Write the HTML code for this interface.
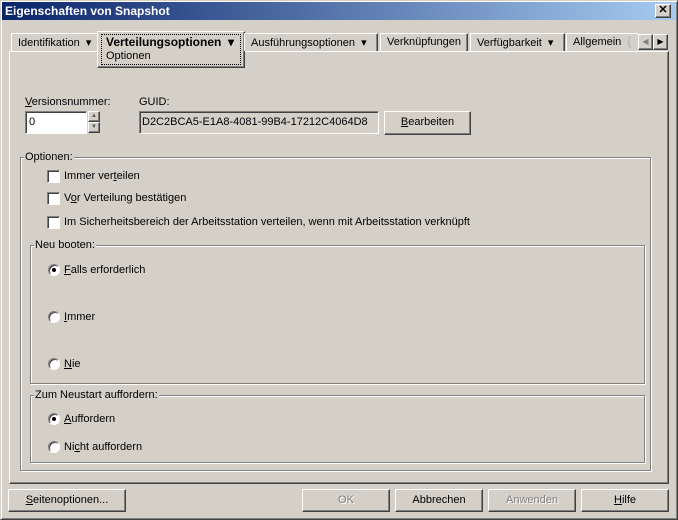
<!DOCTYPE html>
<html><head><meta charset="utf-8"><style>
*{box-sizing:border-box;margin:0;padding:0}
body{width:678px;height:520px;background:#d4d0c8;font:11px "Liberation Sans",Arial,sans-serif;color:#000;position:relative;overflow:hidden}
.a{position:absolute;white-space:nowrap}
.win{position:absolute;left:0;top:0;width:678px;height:520px;border:1px solid;border-color:#d4d0c8 #404040 #404040 #d4d0c8;box-shadow:inset 1px 1px #fff,inset -1px -1px #808080}
.title{position:absolute;left:2px;top:2px;width:674px;height:18px;background:linear-gradient(90deg,#0a246a,#a6caf0);color:#fff;font-weight:bold;font-size:12px;padding:2px 0 0 3px}
.raised{border:1px solid;border-color:#fff #404040 #404040 #fff;box-shadow:inset -1px -1px #808080}
.sunk{border:1px solid;border-color:#808080 #fff #fff #808080;box-shadow:inset 1px 1px #404040}
.tab{position:absolute;top:33px;height:18px;border:1px solid;border-color:#fff #404040 transparent #fff;border-bottom:none;box-shadow:inset -1px 0 #808080;padding:2px 0 0 6px}
.grp{position:absolute;border:1px solid #808080;box-shadow:1px 1px #fff,inset 1px 1px #fff}
.gl{position:absolute;background:#d4d0c8;padding:0 1px;top:-7px;left:3px}
.cb{position:absolute;width:13px;height:13px;background:#fff;border:1px solid;border-color:#808080 #fff #fff #808080;box-shadow:inset 1px 1px #404040}
.rb{position:absolute;width:12px;height:12px;border-radius:50%;background:#fff;border:1px solid;border-color:#808080 #fff #fff #808080;box-shadow:inset 1px 1px #404040}
.rb.on::after{content:"";position:absolute;left:3px;top:3px;width:4px;height:4px;border-radius:50%;background:#000}
.btn{position:absolute;height:23px;text-align:center;padding-top:4px;border:1px solid;border-color:#fff #404040 #404040 #fff;box-shadow:inset -1px -1px #808080}
.dis{color:#808080;text-shadow:1px 1px #fff}
u{text-decoration:underline}
</style></head><body>
<div class="win"></div>
<div class="title">Eigenschaften von Snapshot</div>
<div class="a raised" style="left:655px;top:4px;width:16px;height:14px;background:#d4d0c8;font-size:11px;font-weight:bold;text-align:center;line-height:11px">✕</div>

<!-- content panel -->
<div class="a" style="left:9px;top:51px;width:660px;height:433px;border:1px solid;border-color:#fff #404040 #404040 #fff;box-shadow:inset -1px -1px #808080"></div>

<div class="tab" style="left:11px;width:88px">Identifikation &nbsp;▾</div>
<div class="a" style="left:97px;top:31px;width:148px;height:37px;background:#d4d0c8;border:1px solid;border-color:#fff #404040 #404040 #fff;box-shadow:inset -1px -1px #808080"></div>
<div class="a" style="left:101px;top:34px;width:140px;height:31px;border:1px dotted #000"></div>
<div class="a" style="left:106px;top:35px;font-weight:bold;font-size:12px">Verteilungsoptionen &nbsp;▾</div>
<div class="a" style="left:106px;top:50px">Optionen</div>
<div class="tab" style="left:244px;width:134px">Ausführungsoptionen &nbsp;▾</div>
<div class="tab" style="left:380px;width:88px">Verknüpfungen</div>
<div class="tab" style="left:470px;width:95px">Verfügbarkeit &nbsp;▾</div>
<div class="tab" style="left:566px;width:72px;border-right:none;box-shadow:none">Allgemein &nbsp;<span style="color:#aaa">{</span></div>
<div class="a raised" style="left:638px;top:34px;width:15px;height:16px;text-align:center;font-size:8px;color:#808080;padding-top:2px">◀</div>
<div class="a raised" style="left:653px;top:34px;width:15px;height:16px;text-align:center;font-size:8px;padding-top:2px">▶</div>

<div class="a" style="left:25px;top:96px"><u>V</u>ersionsnummer:</div>
<div class="a sunk" style="left:25px;top:111px;width:62px;height:23px;background:#fff;padding:4px 0 0 3px">0</div>
<div class="a raised" style="left:88px;top:111px;width:12px;height:11px;font-size:6px;text-align:center;line-height:9px;color:#555">▲</div>
<div class="a raised" style="left:88px;top:122px;width:12px;height:11px;font-size:6px;text-align:center;line-height:9px;color:#555">▼</div>
<div class="a" style="left:139px;top:96px">GUID:</div>
<div class="a sunk" style="left:139px;top:111px;width:240px;height:23px;padding:4px 0 0 2px">D2C2BCA5-E1A8-4081-99B4-17212C4064D8</div>
<div class="btn" style="left:384px;top:111px;width:87px;height:24px"><u>B</u>earbeiten</div>

<div class="grp" style="left:20px;top:157px;width:631px;height:314px"><span class="gl">Optionen:</span></div>
<div class="cb" style="left:47px;top:170px"></div><div class="a" style="left:64px;top:170px">Immer ver<u>t</u>eilen</div>
<div class="cb" style="left:47px;top:192px"></div><div class="a" style="left:64px;top:192px">V<u>o</u>r Verteilung bestätigen</div>
<div class="cb" style="left:47px;top:216px"></div><div class="a" style="left:64px;top:216px">Im Sicherheitsbereich der Arbeitsstation verteilen, wenn mit Arbeitsstation verknüpft</div>

<div class="grp" style="left:30px;top:245px;width:615px;height:139px"><span class="gl">Neu booten:</span></div>
<div class="rb on" style="left:48px;top:264px"></div><div class="a" style="left:64px;top:264px"><u>F</u>alls erforderlich</div>
<div class="rb" style="left:48px;top:311px"></div><div class="a" style="left:64px;top:311px"><u>I</u>mmer</div>
<div class="rb" style="left:48px;top:358px"></div><div class="a" style="left:64px;top:358px"><u>N</u>ie</div>

<div class="grp" style="left:30px;top:395px;width:615px;height:68px"><span class="gl">Zum Neustart auffordern:</span></div>
<div class="rb on" style="left:48px;top:413px"></div><div class="a" style="left:64px;top:413px"><u>A</u>uffordern</div>
<div class="rb" style="left:48px;top:441px"></div><div class="a" style="left:64px;top:441px">Ni<u>c</u>ht auffordern</div>

<div class="btn" style="left:8px;top:489px;width:118px"><u>S</u>eitenoptionen...</div>
<div class="btn dis" style="left:302px;top:489px;width:88px">OK</div>
<div class="btn" style="left:395px;top:489px;width:88px">Abbrechen</div>
<div class="btn dis" style="left:488px;top:489px;width:88px">Anwenden</div>
<div class="btn" style="left:581px;top:489px;width:88px"><u>H</u>ilfe</div>
</body></html>
